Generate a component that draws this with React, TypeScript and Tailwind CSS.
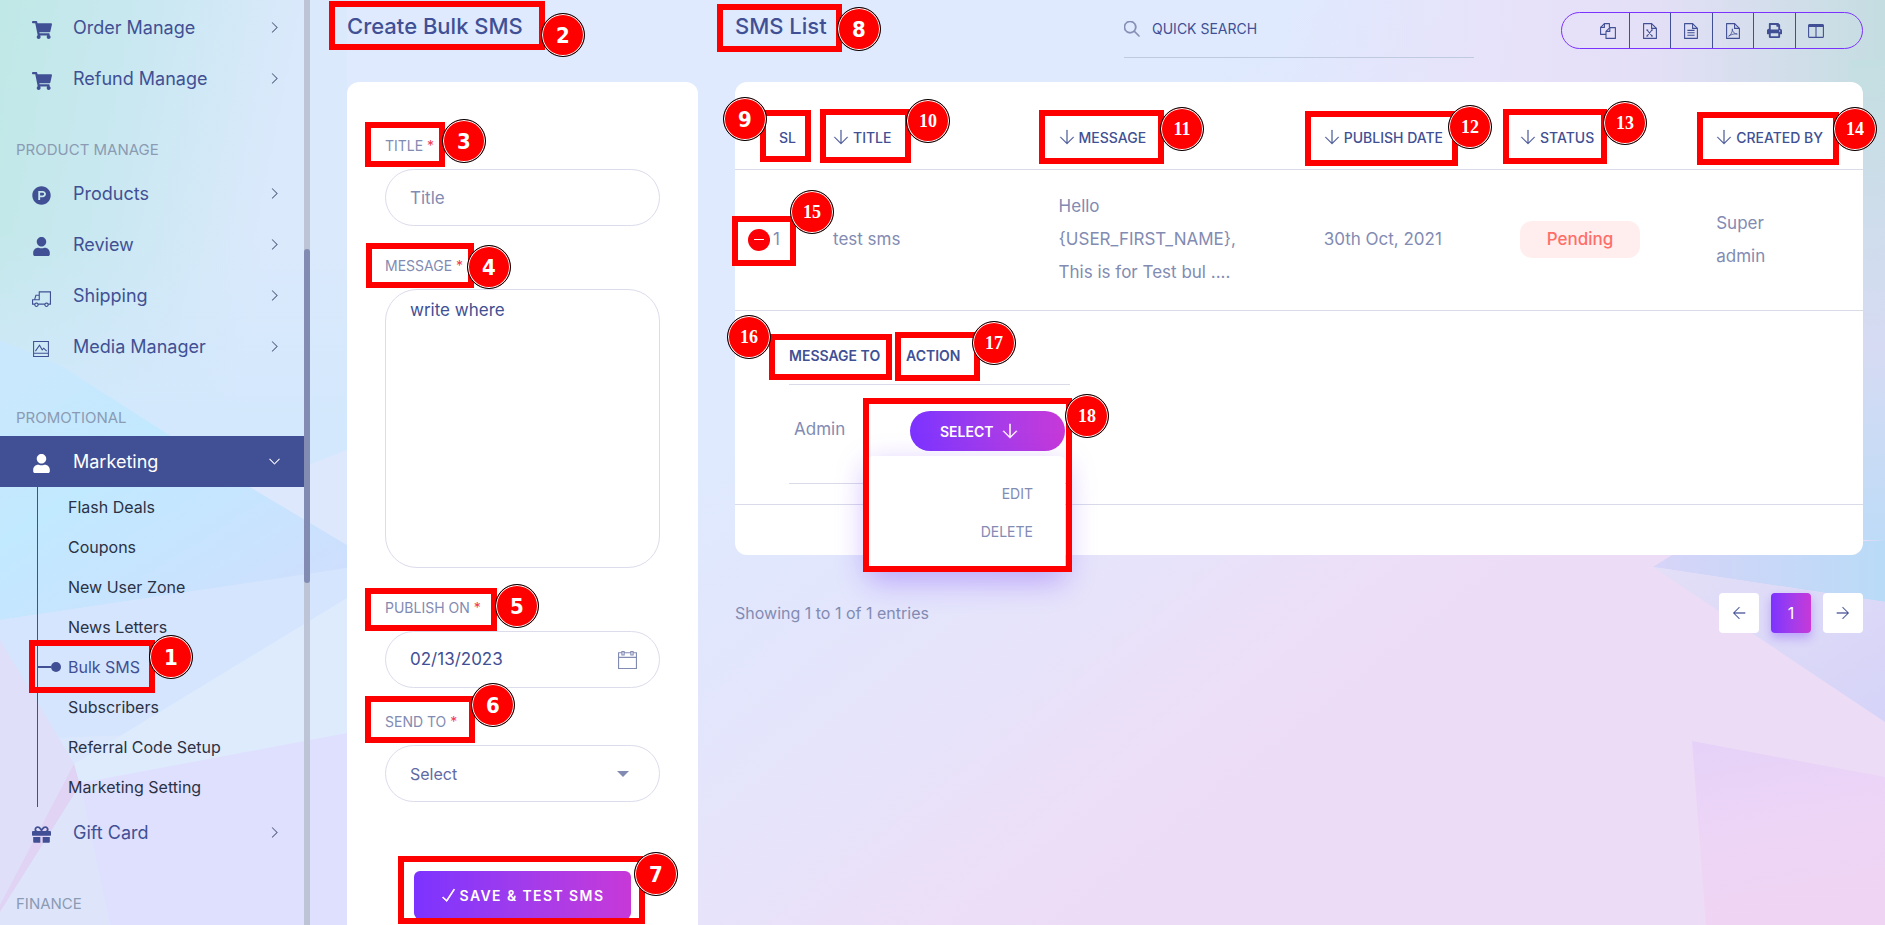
import React, { useState } from 'react';
import { FaShoppingCart, FaProductHunt, FaUser, FaGift, FaPrint } from 'react-icons/fa';
import {
  TfiTruck,
  TfiImage,
  TfiAngleRight,
  TfiAngleDown,
  TfiArrowDown,
  TfiArrowLeft,
  TfiArrowRight,
  TfiSearch,
  TfiCalendar,
  TfiCheck,
} from 'react-icons/tfi';

const promoLinks = [
  'Flash Deals',
  'Coupons',
  'New User Zone',
  'News Letters',
  'Bulk SMS',
  'Subscribers',
  'Referral Code Setup',
  'Marketing Setting',
];

const columns = ['Title', 'Message', 'Publish Date', 'Status', 'Created By'];

// Numbered guide marks: the frame, then the centre of its badge
const marks = [
  { n: 1, x: 29, y: 640, w: 126, h: 53, bx: 171, by: 657 },
  { n: 2, x: 329, y: 1, w: 216, h: 49, bx: 563, by: 35 },
  { n: 3, x: 365, y: 122, w: 80, h: 45, bx: 464, by: 141 },
  { n: 4, x: 366, y: 243, w: 108, h: 45, bx: 489, by: 267 },
  { n: 5, x: 365, y: 588, w: 132, h: 43, bx: 517, by: 606 },
  { n: 6, x: 365, y: 696, w: 110, h: 47, bx: 493, by: 705 },
  { n: 7, x: 398, y: 856, w: 247, h: 68, bx: 656, by: 874 },
  { n: 8, x: 717, y: 4, w: 125, h: 48, bx: 859, by: 29 },
  { n: 9, x: 760, y: 110, w: 51, h: 52, bx: 745, by: 119 },
  { n: 10, x: 820, y: 109, w: 91, h: 54, bx: 928, by: 121 },
  { n: 11, x: 1039, y: 110, w: 125, h: 54, bx: 1182, by: 129 },
  { n: 12, x: 1305, y: 111, w: 153, h: 55, bx: 1470, by: 127 },
  { n: 13, x: 1503, y: 109, w: 104, h: 55, bx: 1625, by: 123 },
  { n: 14, x: 1697, y: 112, w: 142, h: 53, bx: 1855, by: 129 },
  { n: 15, x: 732, y: 216, w: 64, h: 50, bx: 812, by: 212 },
  { n: 16, x: 769, y: 334, w: 123, h: 46, bx: 749, by: 337 },
  { n: 17, x: 895, y: 332, w: 85, h: 49, bx: 994, by: 343 },
  { n: 18, x: 863, y: 398, w: 209, h: 174, bx: 1087, by: 416 },
];

function Backdrop() {
  return (
    <svg
      className="absolute inset-0 h-full w-full"
      viewBox="0 0 1885 925"
      preserveAspectRatio="none"
      aria-hidden="true"
    >
      <defs>
        <linearGradient id="base" x1="500" y1="630" x2="872" y2="1098" gradientUnits="userSpaceOnUse">
          <stop offset="0" stopColor="#dfeafe" />
          <stop offset="0.2" stopColor="#e1e7fd" />
          <stop offset="0.6" stopColor="#e7e3fa" />
          <stop offset="0.87" stopColor="#eddef7" />
          <stop offset="1" stopColor="#ecdcf6" />
        </linearGradient>
        <linearGradient id="side" x1="0" y1="0" x2="304" y2="60" gradientUnits="userSpaceOnUse">
          <stop offset="0" stopColor="#c0e8e6" />
          <stop offset="0.45" stopColor="#c9e8f1" />
          <stop offset="1" stopColor="#dbe9fc" />
        </linearGradient>
        <linearGradient id="sideLow" x1="0" y1="0" x2="0" y2="1">
          <stop offset="0" stopColor="#d3e8fc" stopOpacity="0" />
          <stop offset="0.3" stopColor="#d3e8fd" />
          <stop offset="1" stopColor="#dfe6fc" />
        </linearGradient>
        <linearGradient id="cyan" x1="0.2" y1="0" x2="0.9" y2="0.9">
          <stop offset="0" stopColor="#cae8fd" />
          <stop offset="0.4" stopColor="#c1e9ff" />
          <stop offset="1" stopColor="#cedffd" />
        </linearGradient>
        <linearGradient id="top" x1="0" y1="0" x2="1" y2="0">
          <stop offset="0" stopColor="#e7e3fa" stopOpacity="0" />
          <stop offset="0.4" stopColor="#e7e2f9" />
          <stop offset="0.62" stopColor="#e3dff6" />
          <stop offset="1" stopColor="#c4dde1" />
        </linearGradient>
        <linearGradient id="edge" x1="0" y1="0" x2="0" y2="1">
          <stop offset="0" stopColor="#c4dfe1" />
          <stop offset="0.6" stopColor="#d6dbf3" />
          <stop offset="1" stopColor="#bedbf7" />
        </linearGradient>
        <linearGradient id="blue" x1="0" y1="0" x2="1" y2="0">
          <stop offset="0" stopColor="#d7d4f8" />
          <stop offset="1" stopColor="#b9dbf7" />
        </linearGradient>
        <linearGradient id="lilac" x1="0" y1="0" x2="1" y2="1">
          <stop offset="0" stopColor="#e3dff7" />
          <stop offset="1" stopColor="#d5d3f8" />
        </linearGradient>
        <linearGradient id="pink" x1="0.2" y1="0" x2="0.4" y2="1">
          <stop offset="0" stopColor="#e6d2f8" />
          <stop offset="0.5" stopColor="#edd5f6" />
          <stop offset="1" stopColor="#f0d4f3" />
        </linearGradient>
      </defs>
      <rect width="1885" height="925" fill="url(#base)" />
      <rect x="1285" width="600" height="260" fill="url(#top)" />
      <rect x="1850" y="60" width="35" height="480" fill="url(#edge)" />
      <polygon points="1653,567 1680,550 1885,540 1885,602" fill="url(#blue)" />
      <polygon points="1653,567 1885,602 1885,722" fill="url(#lilac)" />
      <polygon points="1692,741 1885,777 1885,925 1706,925" fill="url(#pink)" />

      <rect width="347" height="925" fill="url(#side)" />
      <rect y="230" width="347" height="695" fill="url(#sideLow)" />
      <polygon points="0,340 60,365 250,487 347,545 347,568 304,575 0,620" fill="url(#cyan)" />
      <polygon points="250,487 347,450 347,545" fill="#dde8fd" />
      <polygon points="0,620 347,568 347,600 130,735 0,740" fill="#d5e5fe" />
      <polygon points="0,640 75,765 0,925" fill="#dfdff9" />
      <polygon points="74,764 347,598 347,735 80,786" fill="#deebfd" />
      <polygon points="80,783 347,733 347,925 110,925" fill="#dfe0fe" />
      <polygon points="74,764 80,785 0,915 0,905" fill="#e0d3f3" />
      <polygon points="80,785 110,925 0,925 0,912" fill="#dee5fb" />
    </svg>
  );
}

// Sheet of paper with a folded corner, used by the export buttons
function FileIcon({ children }: { children?: React.ReactNode }) {
  return (
    <svg width="14" height="16" viewBox="0 0 14 16" fill="none" stroke="currentColor" strokeWidth="1.1">
      <path d="M.6.6h8l4.8 4.8v10H.6z" strokeLinejoin="round" />
      <path d="M8.6.6v4.8h4.8" />
      {children}
    </svg>
  );
}

function CopyIcon() {
  return (
    <svg width="16" height="16" viewBox="0 0 16 16" fill="none" stroke="currentColor" strokeWidth="1.1" strokeLinejoin="round">
      <path d="M6 11.4H.6V4.4L4.4.6h5v4" />
      <path d="M4.4.6v3.8H.6" />
      <path d="M6 8.4l3.8-3.8h5.6v10.8H6z" />
      <path d="M9.8 4.6v3.8H6" />
    </svg>
  );
}

function ColumnsIcon() {
  return (
    <svg width="16" height="14" viewBox="0 0 16 14" fill="none" stroke="currentColor" strokeWidth="1.1">
      <rect x=".6" y=".6" width="14.8" height="12.8" rx="1" />
      <path d="M.6 1.8h14.8" strokeWidth="2.4" />
      <path d="M8 2v11.4" />
    </svg>
  );
}

const exportButtons = [
  { label: 'Copy', icon: <CopyIcon /> },
  { label: 'Excel', icon: <FileIcon><path d="M4 7l5 6M9 7l-5 6M3.2 7h2M8 7h2M3.2 13h2M8 13h2" /></FileIcon> },
  { label: 'CSV', icon: <FileIcon><path d="M3.4 7.4h7.2M3.4 9.8h7.2M3.4 12.2h7.2" /></FileIcon> },
  { label: 'PDF', icon: <FileIcon><path d="M2.6 13.2c2-1 4.2-4.4 3.7-7.4 0 3 2.3 5.4 5 5.2-2.6-.5-5.7.2-8.7 2.2z" strokeWidth=".8" /></FileIcon> },
  { label: 'Print', icon: <FaPrint size={15} /> },
  { label: 'Columns', icon: <ColumnsIcon /> },
];

function NavGroup({ title }: { title: string }) {
  return <h3 className="h-16 pt-9 pl-4 text-[15px] leading-5 uppercase text-[#8a9bb3]">{title}</h3>;
}

function NavItem({ icon, label, open }: { icon: React.ReactNode; label: string; open?: boolean }) {
  return (
    <a
      href="#"
      className={`flex h-[51px] items-center pl-8 pr-6 text-[18px] ${
        open ? 'bg-[#415094] text-white' : 'text-[#415094]'
      }`}
    >
      <span className="flex w-[41px] pt-1">{icon}</span>
      <span className="flex-1">{label}</span>
      {open ? (
        <TfiAngleDown size={11} strokeWidth={0.8} />
      ) : (
        <TfiAngleRight size={11} strokeWidth={0.5} className="text-[#4b5578]" />
      )}
    </a>
  );
}

function Sidebar() {
  return (
    <aside className="relative flex w-[310px] shrink-0">
      <nav className="flex-1 pt-[2px]">
        <NavItem icon={<FaShoppingCart size={20} />} label="Order Manage" />
        <NavItem icon={<FaShoppingCart size={20} />} label="Refund Manage" />
        <NavGroup title="Product Manage" />
        <NavItem icon={<FaProductHunt size={19} />} label="Products" />
        <NavItem icon={<FaUser size={19} />} label="Review" />
        <NavItem icon={<TfiTruck size={19} />} label="Shipping" />
        <NavItem icon={<TfiImage size={18} />} label="Media Manager" />
        <NavGroup title="Promotional" />
        <NavItem icon={<FaUser size={19} />} label="Marketing" open />
        <ul className="ml-[37px] border-l border-[#415094]">
          {promoLinks.map((link) => (
            <li key={link} className="flex h-10 items-center">
              <span className="flex w-[30px] items-center">
                {link === 'Bulk SMS' && (
                  <>
                    <span className="h-[2px] w-[13px] bg-[#415094]" />
                    <span className="size-[10px] rounded-full bg-[#415094]" />
                  </>
                )}
              </span>
              <a href="#" className={`text-[16px] ${link === 'Bulk SMS' ? 'text-[#415094]' : 'text-[#2b3245]'}`}>
                {link}
              </a>
            </li>
          ))}
        </ul>
        <NavItem icon={<FaGift size={19} />} label="Gift Card" />
        <NavGroup title="Finance" />
      </nav>
      {/* Scrollbar */}
      <div className="w-[6px] bg-[#bcc4d6] pt-[249px]">
        <div className="h-[334px] rounded-full bg-[#828bb2]" />
      </div>
    </aside>
  );
}

function FieldLabel({ htmlFor, children }: { htmlFor: string; children: React.ReactNode }) {
  return (
    <label htmlFor={htmlFor} className="mb-[13px] block text-[14px] leading-5 uppercase text-[#828bb2]">
      {children} <span className="text-[#ef3b4f]">*</span>
    </label>
  );
}

function SmsForm() {
  const [form, setForm] = useState({ title: '', message: 'write where', date: '02/13/2023', sendTo: '' });

  const handleChange = (e: React.ChangeEvent<HTMLInputElement | HTMLSelectElement | HTMLTextAreaElement>) => {
    const { name, value } = e.target;
    setForm((prev) => ({ ...prev, [name]: value }));
  };

  return (
    <section className="flex w-[351px] shrink-0 flex-col">
      <h1 className="h-[82px] pt-[10px] text-[22px] leading-8 font-medium text-[#415094]">Create Bulk SMS</h1>
      <form
        onSubmit={(e) => e.preventDefault()}
        className="flex-1 rounded-t-xl bg-white px-[38px] pt-[54px]"
      >
        <div className="mb-[30px]">
          <FieldLabel htmlFor="title">Title</FieldLabel>
          <input
            id="title"
            name="title"
            value={form.title}
            onChange={handleChange}
            placeholder="Title"
            className="h-[57px] w-full rounded-full border border-[#dcdcec] px-6 text-[17px] text-[#415094] placeholder:text-[#828bb2]"
          />
        </div>
        <div className="mb-[30px]">
          <FieldLabel htmlFor="message">Message</FieldLabel>
          <textarea
            id="message"
            name="message"
            value={form.message}
            onChange={handleChange}
            className="block h-[279px] w-full resize-none rounded-[32px] border border-[#dcdcec] px-6 py-2 text-[17px] text-[#415094]"
          />
        </div>
        <div className="mb-6">
          <FieldLabel htmlFor="date">Publish On</FieldLabel>
          <div className="flex h-[57px] items-center rounded-full border border-[#dcdcec] pl-6 pr-[22px]">
            <input
              id="date"
              name="date"
              value={form.date}
              onChange={handleChange}
              className="min-w-0 flex-1 text-[17px] text-[#415094]"
            />
            <TfiCalendar size={19} className="text-[#828bb2]" />
          </div>
        </div>
        <div className="mb-[69px]">
          <FieldLabel htmlFor="sendTo">Send To</FieldLabel>
          <div className="flex h-[57px] items-center rounded-full border border-[#dcdcec] pl-6 pr-[30px]">
            <select
              id="sendTo"
              name="sendTo"
              value={form.sendTo}
              onChange={handleChange}
              className="min-w-0 flex-1 appearance-none text-[16px] text-[#5f6ba4]"
            >
              <option value="">Select</option>
            </select>
            <span className="border-x-6 border-t-6 border-x-transparent border-t-[#828bb2]" />
          </div>
        </div>
        <button
          type="submit"
          className="mx-auto flex h-12 w-[217px] items-center justify-center gap-1 rounded-md bg-linear-to-r from-[#7c32ff] to-[#c738d8] text-[14px] font-semibold tracking-widest text-white"
        >
          <TfiCheck size={15} strokeWidth={1} />
          SAVE &amp; TEST SMS
        </button>
      </form>
    </section>
  );
}

function SmsTable() {
  return (
    <div className="rounded-xl bg-white pb-[50px]">
      <table className="w-full table-fixed text-left text-[17px] text-[#828bb2]">
        <colgroup>
          <col className="w-[98px]" />
          <col className="w-[20%]" />
          <col className="w-[23.5%]" />
          <col className="w-[17.4%]" />
          <col className="w-[17.4%]" />
          <col />
        </colgroup>
        <thead>
          <tr className="h-[87px] border-b border-[#d9dbe9] text-[14px] uppercase text-[#415094]">
            <th className="pl-11 pt-6 font-medium">SL</th>
            {columns.map((name) => (
              <th key={name} className="pt-6 font-medium">
                <span className="flex items-center gap-1 whitespace-nowrap">
                  <TfiArrowDown size={16} strokeWidth={0.2} />
                  {name}
                </span>
              </th>
            ))}
          </tr>
        </thead>
        <tbody>
          <tr className="h-[141px] border-b border-[#d9dbe9]">
            <td className="pl-[13px]">
              <span className="flex items-center gap-[3px]">
                <button type="button" aria-label="Hide details" className="flex size-[22px] items-center justify-center rounded-full bg-[#fb0007]">
                  <span className="h-px w-[10px] bg-white" />
                </button>
                1
              </span>
            </td>
            <td>test sms</td>
            <td className="leading-[33px]">
              Hello
              <br />
              {'{USER_FIRST_NAME},'}
              <br />
              This is for Test bul ....
            </td>
            <td>30th Oct, 2021</td>
            <td>
              <span className="flex h-[37px] w-[120px] items-center justify-center rounded-xl bg-[#ffeeed] font-medium text-[#ff6d68]">
                Pending
              </span>
            </td>
            <td className="leading-[33px]">
              Super
              <br />
              admin
            </td>
          </tr>
          <tr className="border-b border-[#d9dbe9]">
            <td colSpan={6} className="pb-5 pl-[54px] pt-5 align-top">
              <table className="w-[281px] table-fixed">
                <thead>
                  <tr className="h-[54px] border-b border-[#d9dbe9] text-[14px] uppercase text-[#415094]">
                    <th className="w-[117px] pb-1 whitespace-nowrap font-semibold">Message To</th>
                    <th className="pb-1 font-semibold">Action</th>
                  </tr>
                </thead>
                <tbody>
                  <tr className="border-b border-[#d9dbe9]">
                    <td className="h-[99px] pb-2 pl-[5px]">Admin</td>
                    <td className="pb-8 pr-[5px] pt-[26px]">
                      <RowMenu />
                    </td>
                  </tr>
                </tbody>
              </table>
            </td>
          </tr>
        </tbody>
      </table>
    </div>
  );
}

function RowMenu() {
  return (
    <div className="relative flex justify-end">
      <button
        type="button"
        className="flex h-10 w-[155px] items-center gap-2 rounded-full bg-linear-to-r from-[#7c32ff] to-[#c738d8] pl-[30px] text-[14px] font-semibold text-white"
      >
        SELECT
        <TfiArrowDown size={16} strokeWidth={0.6} />
      </button>
      <div className="absolute right-0 top-[45px] flex h-[115px] w-[198px] flex-col items-end gap-[18px] rounded-md bg-white pr-8 pt-7 text-[14px] leading-5 shadow-[0_10px_30px_rgba(108,39,255,0.35)]">
        <a href="#">EDIT</a>
        <a href="#">DELETE</a>
      </div>
    </div>
  );
}

function SmsList() {
  return (
    <section className="min-w-0 flex-1">
      <div className="flex h-[82px] items-start">
        <h2 className="w-[389px] pt-[10px] text-[22px] leading-8 font-medium text-[#415094]">SMS List</h2>
        <label className="flex h-[58px] w-[350px] items-center gap-3 border-b border-[#bfcade] text-[#828bb2]">
          <TfiSearch size={16} strokeWidth={0.8} />
          <input
            aria-label="Quick search"
            placeholder="QUICK SEARCH"
            className="min-w-0 flex-1 text-[14px] text-[#415094] placeholder:text-[#415094]"
          />
        </label>
        <div className="ml-auto mt-3 flex h-[37px] w-[302px] items-stretch rounded-full border border-[#7c32ff] px-[26px] text-[#415094]">
          {exportButtons.map((btn) => (
            <button
              key={btn.label}
              type="button"
              aria-label={btn.label}
              className="flex flex-1 items-center justify-center border-l border-[#415094] first:border-l-0"
            >
              {btn.icon}
            </button>
          ))}
        </div>
      </div>
      <SmsTable />
      <div className="mt-[38px] flex items-center justify-between">
        <p className="text-[16px] text-[#828bb2]">Showing 1 to 1 of 1 entries</p>
        <div className="flex gap-3 text-[16px] text-[#415094]">
          <button type="button" aria-label="Previous" className="flex size-10 items-center justify-center rounded bg-white">
            <TfiArrowLeft size={14} strokeWidth={0.3} />
          </button>
          <button
            type="button"
            className="size-10 rounded bg-linear-to-r from-[#7c32ff] to-[#c738d8] text-white shadow-[0_5px_10px_rgba(108,39,255,0.3)]"
          >
            1
          </button>
          <button type="button" aria-label="Next" className="flex size-10 items-center justify-center rounded bg-white">
            <TfiArrowRight size={14} strokeWidth={0.3} />
          </button>
        </div>
      </div>
    </section>
  );
}

function GuideMarks() {
  return (
    <div className="pointer-events-none absolute inset-0">
      {marks.map((m) => (
        <React.Fragment key={m.n}>
          <div
            className="absolute border-6 border-[#ff0000]"
            style={{ left: m.x, top: m.y, width: m.w, height: m.h }}
          />
          <div
            className={`absolute flex size-11 -translate-x-1/2 -translate-y-1/2 items-center justify-center rounded-full border border-black bg-[#ff0000] font-bold text-white shadow-[inset_0_0_0_1px_#ffffff] ${
              m.n > 9
                ? "text-[18px] [font-family:'Liberation_Serif',serif]"
                : "text-[22px] [font-family:'DejaVu_Sans_Condensed','DejaVu_Sans',sans-serif]"
            }`}
            style={{ left: m.bx, top: m.by }}
          >
            {m.n}
          </div>
        </React.Fragment>
      ))}
    </div>
  );
}

export default function App() {
  return (
    <div className="relative h-screen overflow-hidden [font-family:Inter,sans-serif]">
      <Backdrop />
      <div className="relative flex h-full">
        <Sidebar />
        <main className="flex min-w-0 flex-1 gap-[37px] pl-[37px] pr-[22px]">
          <SmsForm />
          <SmsList />
        </main>
      </div>
      <GuideMarks />
    </div>
  );
}
